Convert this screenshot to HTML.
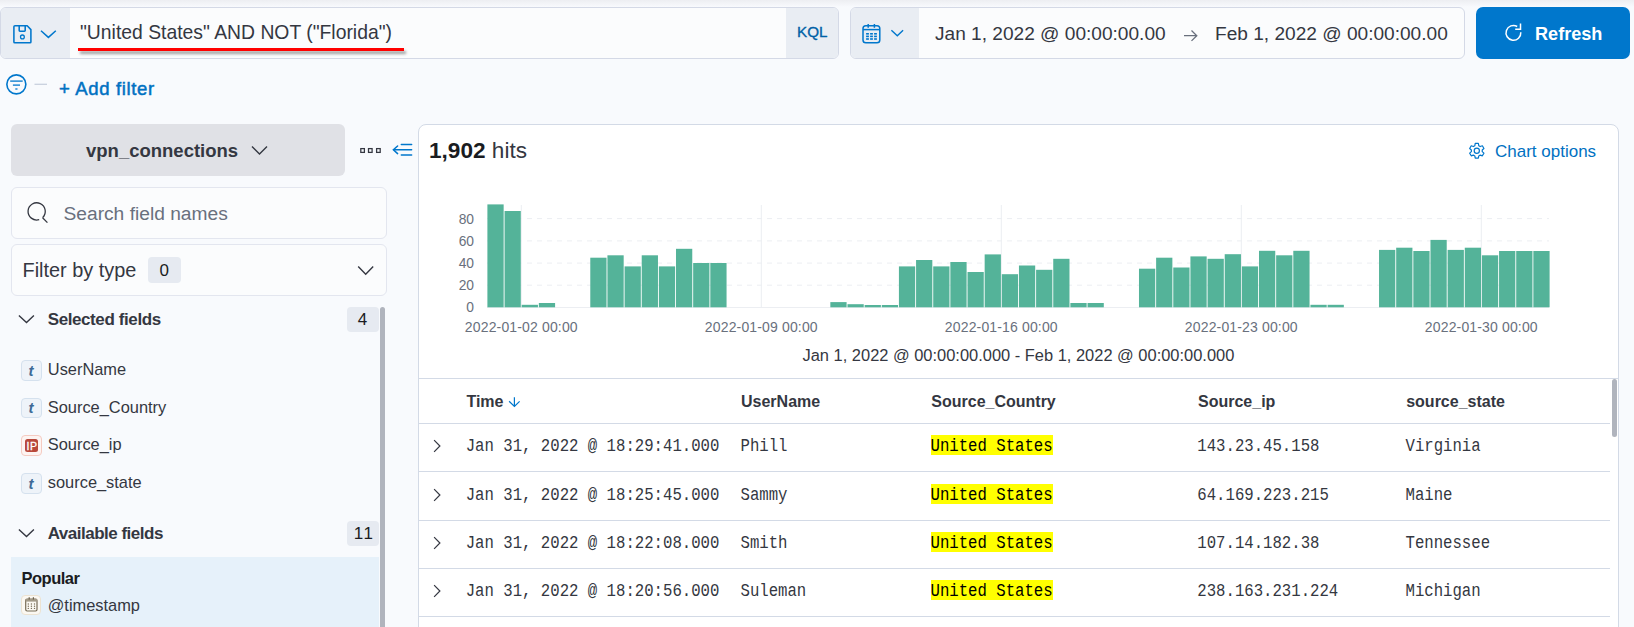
<!DOCTYPE html>
<html><head><meta charset="utf-8">
<style>
*{box-sizing:border-box}
html,body{margin:0;padding:0;width:1634px;height:627px;overflow:hidden;background:#f8fafd;font-family:"Liberation Sans",sans-serif;color:#343741;position:relative}
.a{position:absolute}
.t{position:absolute;line-height:1;white-space:nowrap}
.m{font-family:"Liberation Mono",monospace}
svg{overflow:visible}
</style></head><body>
<div class="a" style="left:0;top:0;width:1634px;height:7px;background:linear-gradient(#edeef2,#f8fafd)"></div>

<!-- query bar -->
<div class="a" style="left:0;top:7px;width:839px;height:52px;border:1px solid #d4d9e6;border-radius:6px;background:#fbfcfd;overflow:hidden">
  <div class="a" style="left:0;top:0;width:69px;height:50px;background:#e9edf3"></div>
  <div class="a" style="left:785px;top:0;width:53px;height:50px;background:#e9edf3"></div>
</div>
<svg class="a" style="left:0;top:0" width="70" height="59" viewBox="0 0 70 59">
 <g fill="none" stroke="#0077cc" stroke-width="1.55" stroke-linejoin="round">
  <path d="M15 25.8 H27.2 L30.9 29.6 V41.9 Q30.9 42.8 30 42.8 H14.8 Q13.9 42.8 13.9 41.9 V26.7 Q13.9 25.8 15 25.8 Z"/>
  <path d="M19.2 25.8 V30.6 Q19.2 31.3 19.9 31.3 H24.5 Q25.2 31.3 25.2 30.6 V25.8"/>
  <circle cx="22.4" cy="36.9" r="1.9" stroke-width="1.3"/>
 </g>
 <path d="M41 30.7 L48.4 37.4 L55.8 30.7" fill="none" stroke="#0077cc" stroke-width="1.45"/>
</svg>
<div class="t" style="left:80px;top:22.5px;font-size:19.35px;color:#343741">"United States" AND NOT ("Florida")</div>
<div class="a" style="left:78px;top:48px;width:325.5px;height:3px;background:#ff0000;box-shadow:2px 3px 3px rgba(0,0,0,0.38)"></div>
<div class="t" style="left:797px;top:24.1px;font-size:15.2px;-webkit-text-stroke:0.35px #0061a6;color:#0061a6">KQL</div>

<!-- date picker -->
<div class="a" style="left:850px;top:7px;width:615px;height:52px;border:1px solid #d4d9e6;border-radius:6px;background:#fbfcfd;overflow:hidden">
  <div class="a" style="left:0;top:0;width:68px;height:50px;background:#e9edf3"></div>
</div>
<svg class="a" style="left:850px;top:0" width="70" height="59" viewBox="850 0 70 59">
 <g fill="none" stroke="#0077cc" stroke-width="1.5">
  <rect x="863" y="25.8" width="16.8" height="17" rx="2.8"/>
  <line x1="863" y1="29.6" x2="879.8" y2="29.6"/>
  <line x1="868.2" y1="24" x2="868.2" y2="27.8"/>
  <line x1="874.4" y1="24" x2="874.4" y2="27.8"/>
 </g>
 <g fill="#0077cc">
  <rect x="866.1" y="33" width="2.8" height="1.6"/><rect x="870.1" y="33" width="2.8" height="1.6"/><rect x="874.1" y="33" width="2.8" height="1.6"/>
  <rect x="866.1" y="35.6" width="2.8" height="1.6"/><rect x="870.1" y="35.6" width="2.8" height="1.6"/><rect x="874.1" y="35.6" width="2.8" height="1.6"/>
  <rect x="866.1" y="38.2" width="2.8" height="1.6"/><rect x="870.1" y="38.2" width="2.8" height="1.6"/><rect x="874.1" y="38.2" width="2.8" height="1.6"/>
 </g>
 <path d="M891.4 30.2 L897.3 35.7 L903.1 30.2" fill="none" stroke="#0077cc" stroke-width="1.4"/>
</svg>
<div class="t" style="left:935px;top:24.1px;font-size:19.1px;color:#343741">Jan 1, 2022 @ 00:00:00.00</div>
<svg class="a" style="left:1180px;top:28px" width="20" height="16" viewBox="1180 28 20 16">
 <path d="M1184 35.7 H1197 M1191.5 30.5 L1196.8 35.7 L1191.5 40.9" fill="none" stroke="#69707d" stroke-width="1.3"/>
</svg>
<div class="t" style="left:1215px;top:24.1px;font-size:19.1px;color:#343741">Feb 1, 2022 @ 00:00:00.00</div>

<!-- refresh -->
<div class="a" style="left:1476px;top:7px;width:154px;height:52px;border-radius:7px;background:#0077cc"></div>
<svg class="a" style="left:1495px;top:15px" width="35" height="35" viewBox="1495 15 35 35">
 <path d="M1520.8 32.3 A7.4 7.4 0 1 1 1517.2 26.5" fill="none" stroke="#fff" stroke-width="1.5"/>
 <path d="M1520.5 23.4 V29.2 H1515.2" fill="none" stroke="#fff" stroke-width="1.5"/>
</svg>
<div class="t" style="left:1535px;top:24.6px;font-size:18.1px;font-weight:bold;color:#fff">Refresh</div>

<!-- filter row -->
<svg class="a" style="left:0;top:65px" width="60" height="40" viewBox="0 65 60 40">
 <circle cx="16.35" cy="84.35" r="9.5" fill="none" stroke="#0077cc" stroke-width="1.6"/>
 <g stroke="#0077cc" stroke-width="1.3"><line x1="10.2" y1="81.1" x2="22.7" y2="81.1"/><line x1="12.9" y1="85.1" x2="20" y2="85.1"/><line x1="15.3" y1="89" x2="17.5" y2="89"/></g>
 <line x1="34.5" y1="84.3" x2="47" y2="84.3" stroke="#c9d0de" stroke-width="1.3"/>
</svg>
<div class="t" style="left:59px;top:80.3px;font-size:18.5px;letter-spacing:0.65px;-webkit-text-stroke:0.5px #0071c2;color:#0071c2">+ Add filter</div>

<!-- sidebar -->
<div class="a" style="left:11px;top:124px;width:334px;height:52px;border-radius:6px;background:#e0e1e6"></div>
<div class="t" style="left:86px;top:142.3px;font-size:18.5px;font-weight:bold;color:#343741">vpn_connections</div>
<svg class="a" style="left:240px;top:135px" width="190" height="30" viewBox="240 135 190 30">
 <path d="M252 146.4 L259.5 154 L267 146.4" fill="none" stroke="#343741" stroke-width="1.4"/>
 <g fill="none" stroke="#343741" stroke-width="1.25"><rect x="360.8" y="148.6" width="3.6" height="3.8"/><rect x="368.5" y="148.6" width="3.6" height="3.8"/><rect x="376.6" y="148.6" width="3.6" height="3.8"/></g>
 <g fill="none" stroke="#0077cc" stroke-width="1.5" stroke-linecap="round"><path d="M397.6 146 L393.4 149.7 L397.6 153.6"/><line x1="401.3" y1="144.5" x2="411.6" y2="144.5"/><line x1="394" y1="149.7" x2="411.6" y2="149.7"/><line x1="401.3" y1="155" x2="411.6" y2="155"/></g>
</svg>

<div class="a" style="left:11px;top:187px;width:376px;height:52px;border:1px solid #e3e6ef;border-radius:6px;background:#fbfcfd"></div>
<svg class="a" style="left:20px;top:195px" width="40" height="35" viewBox="20 195 40 35">
 <path d="M42.6 217.6 A8.6 8.6 0 1 0 39.2 219.6" fill="none" stroke="#343741" stroke-width="1.3"/>
 <line x1="42.6" y1="217.8" x2="47.4" y2="222.6" stroke="#343741" stroke-width="1.3"/>
</svg>
<div class="t" style="left:63.5px;top:203.6px;font-size:19.2px;color:#69707d">Search field names</div>

<div class="a" style="left:11px;top:244px;width:376px;height:52px;border:1px solid #e3e6ef;border-radius:6px;background:#fbfcfd"></div>
<div class="t" style="left:22.5px;top:260.9px;font-size:19.9px;color:#343741">Filter by type</div>
<div class="a" style="left:148px;top:257px;width:32.5px;height:25.7px;border-radius:4px;background:#e6eaf1"></div>
<div class="t" style="left:159.5px;top:261.5px;font-size:17px;color:#1a1c21">0</div>
<svg class="a" style="left:350px;top:260px" width="30" height="20" viewBox="350 260 30 20">
 <path d="M358.2 266.6 L365.7 274.2 L373.2 266.6" fill="none" stroke="#343741" stroke-width="1.4"/>
</svg>

<svg class="a" style="left:10px;top:305px" width="30" height="25" viewBox="10 305 30 25">
 <path d="M18.9 315.6 L26.5 322.6 L33.9 315.6" fill="none" stroke="#343741" stroke-width="1.4"/>
</svg>
<div class="t" style="left:47.7px;top:311.1px;font-size:17px;font-weight:bold;letter-spacing:-0.4px;color:#343741">Selected fields</div>
<div class="a" style="left:347px;top:307.2px;width:31.7px;height:25.2px;border-radius:4px;background:#e6eaf1"></div>
<div class="t" style="left:357.8px;top:310.6px;font-size:17px;color:#1a1c21">4</div>

<!-- field tokens -->
<div class="a" style="left:21px;top:360px;width:20.6px;height:20.6px;border:1px solid #d5e1ee;border-radius:4px;background:#eef3f9"></div>
<div class="t" style="left:28.4px;top:362.5px;font-size:15px;font-weight:bold;font-style:italic;color:#3d6a96">t</div>
<div class="t" style="left:47.8px;top:361.1px;font-size:16.4px">UserName</div>
<div class="a" style="left:21px;top:397.7px;width:20.6px;height:20.6px;border:1px solid #d5e1ee;border-radius:4px;background:#eef3f9"></div>
<div class="t" style="left:28.4px;top:400.2px;font-size:15px;font-weight:bold;font-style:italic;color:#3d6a96">t</div>
<div class="t" style="left:47.8px;top:398.8px;font-size:16.4px">Source_Country</div>
<div class="a" style="left:21px;top:435.3px;width:20.6px;height:20.6px;border:1px solid #f5cbc2;border-radius:4px;background:#fdf4f2"></div>
<div class="a" style="left:25px;top:439px;width:13px;height:12.8px;border-radius:2.5px;background:#b8483b"></div>
<div class="t" style="left:26.4px;top:440.8px;font-size:10.5px;-webkit-text-stroke:0.3px #fff;color:#fff;letter-spacing:0.8px">IP</div>
<div class="t" style="left:47.8px;top:436.4px;font-size:16.4px">Source_ip</div>
<div class="a" style="left:21px;top:473px;width:20.6px;height:20.6px;border:1px solid #d5e1ee;border-radius:4px;background:#eef3f9"></div>
<div class="t" style="left:28.4px;top:475.5px;font-size:15px;font-weight:bold;font-style:italic;color:#3d6a96">t</div>
<div class="t" style="left:47.8px;top:474.1px;font-size:16.4px">source_state</div>

<svg class="a" style="left:10px;top:520px" width="30" height="25" viewBox="10 520 30 25">
 <path d="M18.9 529.6 L26.5 536.6 L33.9 529.6" fill="none" stroke="#343741" stroke-width="1.4"/>
</svg>
<div class="t" style="left:47.7px;top:524.8px;font-size:17px;font-weight:bold;letter-spacing:-0.5px;color:#343741">Available fields</div>
<div class="a" style="left:347px;top:521.3px;width:31.7px;height:25.2px;border-radius:4px;background:#e6eaf1"></div>
<div class="t" style="left:353.8px;top:524.8px;font-size:17px;color:#1a1c21;letter-spacing:1.6px">11</div>

<div class="a" style="left:11px;top:557px;width:368px;height:70px;background:#e6f1fa"></div>
<div class="t" style="left:21.5px;top:570px;font-size:16.5px;font-weight:bold;letter-spacing:-0.5px;color:#1a1c21">Popular</div>
<div class="a" style="left:21.3px;top:595.4px;width:19.6px;height:19.6px;border:1px solid #ece3d2;border-radius:4px;background:#fbf8f2"></div>
<svg class="a" style="left:20px;top:592px" width="24" height="24" viewBox="20 592 24 24">
 <rect x="25.7" y="599" width="11.3" height="12" rx="1.4" fill="none" stroke="#776c57" stroke-width="1.2"/>
 <rect x="25.7" y="599" width="11.3" height="2.6" fill="#a39a88"/>
 <line x1="29.2" y1="597.2" x2="29.2" y2="599.5" stroke="#6b604b" stroke-width="1.2"/>
 <line x1="33.4" y1="597.2" x2="33.4" y2="599.5" stroke="#6b604b" stroke-width="1.2"/>
 <g fill="#7a705c"><circle cx="28.3" cy="604" r=".7"/><circle cx="31.4" cy="604" r=".7"/><circle cx="34.5" cy="604" r=".7"/><circle cx="28.3" cy="606.2" r=".7"/><circle cx="31.4" cy="606.2" r=".7"/><circle cx="34.5" cy="606.2" r=".7"/><circle cx="28.3" cy="608.4" r=".7"/><circle cx="31.4" cy="608.4" r=".7"/><circle cx="34.5" cy="608.4" r=".7"/></g>
</svg>
<div class="t" style="left:47.7px;top:596.7px;font-size:16.4px">@timestamp</div>
<div class="a" style="left:380px;top:307px;width:4.8px;height:330px;background:#b0b4bd;border-radius:2.5px"></div>

<!-- main panel -->
<div class="a" style="left:418px;top:124px;width:1201px;height:540px;border:1px solid #d3dae6;border-radius:8px;background:#fff"></div>
<div class="t" style="left:429px;top:139.8px;font-size:22.6px;color:#343741"><b style="color:#1a1c21">1,902</b> hits</div>
<svg class="a" style="left:1460px;top:135px" width="35" height="30" viewBox="1460 135 35 30">
 <path id="gear" fill="none" stroke="#0077cc" stroke-width="1.2" stroke-linejoin="round" d="M1474.83 145.67 L1475.24 143.46 L1478.36 143.46 L1478.77 145.67 L1480.26 146.53 L1482.37 145.78 L1483.93 148.48 L1482.23 149.94 L1482.23 151.66 L1483.93 153.12 L1482.37 155.82 L1480.26 155.07 L1478.77 155.93 L1478.36 158.14 L1475.24 158.14 L1474.83 155.93 L1473.34 155.07 L1471.23 155.82 L1469.67 153.12 L1471.37 151.66 L1471.37 149.94 L1469.67 148.48 L1471.23 145.78 L1473.34 146.53Z"/>
 <circle cx="1476.8" cy="150.8" r="2.6" fill="none" stroke="#0077cc" stroke-width="1.2"/>
</svg>
<div class="t" style="left:1495px;top:142.8px;font-size:17px;color:#0071c2">Chart options</div>
<svg class="a" style="left:0;top:0" width="1634" height="627" viewBox="0 0 1634 627">
<g stroke="#eceef2" stroke-width="1" stroke-dasharray="5 5"><line x1="487" y1="218.6" x2="1549" y2="218.6"/><line x1="487" y1="240.9" x2="1549" y2="240.9"/><line x1="487" y1="263.1" x2="1549" y2="263.1"/><line x1="487" y1="285.2" x2="1549" y2="285.2"/></g>
<g stroke="#eceef2" stroke-width="1"><line x1="521.3" y1="205" x2="521.3" y2="307"/><line x1="761.3" y1="205" x2="761.3" y2="307"/><line x1="1001.3" y1="205" x2="1001.3" y2="307"/><line x1="1241.3" y1="205" x2="1241.3" y2="307"/><line x1="1481.3" y1="205" x2="1481.3" y2="307"/><line x1="487" y1="307.5" x2="1549" y2="307.5"/></g>
<g fill="#54b399"><rect x="487.40" y="204.4" width="16.25" height="102.9"/>
<rect x="504.55" y="211.0" width="16.25" height="96.3"/>
<rect x="521.69" y="304.8" width="16.25" height="2.5"/>
<rect x="538.84" y="303.0" width="16.25" height="4.3"/>
<rect x="590.28" y="257.7" width="16.25" height="49.6"/>
<rect x="607.43" y="255.3" width="16.25" height="52.0"/>
<rect x="624.57" y="266.4" width="16.25" height="40.9"/>
<rect x="641.72" y="255.3" width="16.25" height="52.0"/>
<rect x="658.87" y="266.4" width="16.25" height="40.9"/>
<rect x="676.01" y="248.8" width="16.25" height="58.5"/>
<rect x="693.16" y="263.0" width="16.25" height="44.3"/>
<rect x="710.31" y="263.0" width="16.25" height="44.3"/>
<rect x="830.34" y="302.1" width="16.25" height="5.2"/>
<rect x="847.48" y="304.2" width="16.25" height="3.1"/>
<rect x="864.63" y="305.0" width="16.25" height="2.3"/>
<rect x="881.78" y="305.0" width="16.25" height="2.3"/>
<rect x="898.92" y="266.4" width="16.25" height="40.9"/>
<rect x="916.07" y="260.0" width="16.25" height="47.3"/>
<rect x="933.22" y="266.4" width="16.25" height="40.9"/>
<rect x="950.36" y="262.0" width="16.25" height="45.3"/>
<rect x="967.51" y="272.0" width="16.25" height="35.3"/>
<rect x="984.66" y="254.4" width="16.25" height="52.9"/>
<rect x="1001.80" y="274.2" width="16.25" height="33.1"/>
<rect x="1018.95" y="265.5" width="16.25" height="41.8"/>
<rect x="1036.10" y="269.8" width="16.25" height="37.5"/>
<rect x="1053.24" y="258.8" width="16.25" height="48.5"/>
<rect x="1070.39" y="303.0" width="16.25" height="4.3"/>
<rect x="1087.54" y="303.0" width="16.25" height="4.3"/>
<rect x="1138.98" y="268.7" width="16.25" height="38.6"/>
<rect x="1156.12" y="257.7" width="16.25" height="49.6"/>
<rect x="1173.27" y="267.5" width="16.25" height="39.8"/>
<rect x="1190.42" y="256.4" width="16.25" height="50.9"/>
<rect x="1207.56" y="258.8" width="16.25" height="48.5"/>
<rect x="1224.71" y="254.2" width="16.25" height="53.1"/>
<rect x="1241.86" y="266.4" width="16.25" height="40.9"/>
<rect x="1259.00" y="250.8" width="16.25" height="56.5"/>
<rect x="1276.15" y="255.3" width="16.25" height="52.0"/>
<rect x="1293.30" y="250.8" width="16.25" height="56.5"/>
<rect x="1310.45" y="304.8" width="16.25" height="2.5"/>
<rect x="1327.59" y="304.8" width="16.25" height="2.5"/>
<rect x="1379.03" y="249.9" width="16.25" height="57.4"/>
<rect x="1396.18" y="247.7" width="16.25" height="59.6"/>
<rect x="1413.33" y="251.0" width="16.25" height="56.3"/>
<rect x="1430.47" y="239.9" width="16.25" height="67.4"/>
<rect x="1447.62" y="249.9" width="16.25" height="57.4"/>
<rect x="1464.77" y="247.7" width="16.25" height="59.6"/>
<rect x="1481.91" y="255.3" width="16.25" height="52.0"/>
<rect x="1499.06" y="251.0" width="16.25" height="56.3"/>
<rect x="1516.21" y="251.0" width="16.25" height="56.3"/>
<rect x="1533.35" y="251.0" width="16.25" height="56.3"/></g>
<g font-family="Liberation Sans" font-size="13.8" fill="#69707d" text-anchor="end"><text x="474" y="223.6">80</text><text x="474" y="245.9">60</text><text x="474" y="268.1">40</text><text x="474" y="290.2">20</text><text x="474" y="312.3">0</text></g>
<g font-family="Liberation Sans" font-size="14" fill="#69707d" text-anchor="middle" letter-spacing="0.15"><text x="521.3" y="331.6">2022-01-02 00:00</text><text x="761.3" y="331.6">2022-01-09 00:00</text><text x="1001.3" y="331.6">2022-01-16 00:00</text><text x="1241.3" y="331.6">2022-01-23 00:00</text><text x="1481.3" y="331.6">2022-01-30 00:00</text></g>
</svg>
<div class="t" style="left:802.5px;top:347.4px;font-size:16.45px;color:#343741">Jan 1, 2022 @ 00:00:00.000 - Feb 1, 2022 @ 00:00:00.000</div>
<div class="a" style="left:419px;top:378px;width:1199px;height:1px;background:#d3dae6"></div>

<!-- table header -->
<div class="t" style="left:466.4px;top:393.6px;font-size:16px;font-weight:bold;color:#343741">Time</div>
<svg class="a" style="left:505px;top:393px" width="20" height="18" viewBox="505 393 20 18">
 <path d="M514.4 397.2 V406.5 M509.1 401.3 L514.4 406.5 L519.6 401.3" fill="none" stroke="#0077cc" stroke-width="1.2"/>
</svg>
<div class="t" style="left:741px;top:393.6px;font-size:16px;font-weight:bold;color:#343741">UserName</div>
<div class="t" style="left:931.3px;top:393.6px;font-size:16px;font-weight:bold;color:#343741">Source_Country</div>
<div class="t" style="left:1198px;top:393.6px;font-size:16px;font-weight:bold;color:#343741">Source_ip</div>
<div class="t" style="left:1406.2px;top:393.6px;font-size:16px;font-weight:bold;color:#343741">source_state</div>
<div class="a" style="left:419px;top:423px;width:1191px;height:1px;background:#d3dae6"></div>
<div class="a" style="left:419px;top:471px;width:1191px;height:1px;background:#d3dae6"></div>
<div class="a" style="left:419px;top:520px;width:1191px;height:1px;background:#d3dae6"></div>
<div class="a" style="left:419px;top:568px;width:1191px;height:1px;background:#d3dae6"></div>
<div class="a" style="left:419px;top:616px;width:1191px;height:1px;background:#d3dae6"></div>
<svg class="a" style="left:430px;top:438.4px" width="14" height="16" viewBox="0 0 14 16"><path d="M4.1 2.2 L9.9 8 L4.1 13.8" fill="none" stroke="#343741" stroke-width="1.2"/></svg>
<div class="t m" style="left:465.7px;top:440.0px;font-size:15.67px;color:#343741;transform-origin:0 11.9px;transform:scaleY(1.17)">Jan 31, 2022 @ 18:29:41.000</div>
<div class="t m" style="left:740.5px;top:440.0px;font-size:15.67px;color:#343741;transform-origin:0 11.9px;transform:scaleY(1.17)">Phill</div>
<div class="a" style="left:931px;top:435.0px;width:122px;height:20px;background:#ffff00"></div>
<div class="t m" style="left:930.5px;top:440.0px;font-size:15.67px;color:#000;transform-origin:0 11.9px;transform:scaleY(1.17)">United States</div>
<div class="t m" style="left:1197.3px;top:440.0px;font-size:15.67px;color:#343741;transform-origin:0 11.9px;transform:scaleY(1.17)">143.23.45.158</div>
<div class="t m" style="left:1405.5px;top:440.0px;font-size:15.67px;color:#343741;transform-origin:0 11.9px;transform:scaleY(1.17)">Virginia</div>
<svg class="a" style="left:430px;top:486.9px" width="14" height="16" viewBox="0 0 14 16"><path d="M4.1 2.2 L9.9 8 L4.1 13.8" fill="none" stroke="#343741" stroke-width="1.2"/></svg>
<div class="t m" style="left:465.7px;top:488.5px;font-size:15.67px;color:#343741;transform-origin:0 11.9px;transform:scaleY(1.17)">Jan 31, 2022 @ 18:25:45.000</div>
<div class="t m" style="left:740.5px;top:488.5px;font-size:15.67px;color:#343741;transform-origin:0 11.9px;transform:scaleY(1.17)">Sammy</div>
<div class="a" style="left:931px;top:483.5px;width:122px;height:20px;background:#ffff00"></div>
<div class="t m" style="left:930.5px;top:488.5px;font-size:15.67px;color:#000;transform-origin:0 11.9px;transform:scaleY(1.17)">United States</div>
<div class="t m" style="left:1197.3px;top:488.5px;font-size:15.67px;color:#343741;transform-origin:0 11.9px;transform:scaleY(1.17)">64.169.223.215</div>
<div class="t m" style="left:1405.5px;top:488.5px;font-size:15.67px;color:#343741;transform-origin:0 11.9px;transform:scaleY(1.17)">Maine</div>
<svg class="a" style="left:430px;top:535.3px" width="14" height="16" viewBox="0 0 14 16"><path d="M4.1 2.2 L9.9 8 L4.1 13.8" fill="none" stroke="#343741" stroke-width="1.2"/></svg>
<div class="t m" style="left:465.7px;top:536.9px;font-size:15.67px;color:#343741;transform-origin:0 11.9px;transform:scaleY(1.17)">Jan 31, 2022 @ 18:22:08.000</div>
<div class="t m" style="left:740.5px;top:536.9px;font-size:15.67px;color:#343741;transform-origin:0 11.9px;transform:scaleY(1.17)">Smith</div>
<div class="a" style="left:931px;top:531.9px;width:122px;height:20px;background:#ffff00"></div>
<div class="t m" style="left:930.5px;top:536.9px;font-size:15.67px;color:#000;transform-origin:0 11.9px;transform:scaleY(1.17)">United States</div>
<div class="t m" style="left:1197.3px;top:536.9px;font-size:15.67px;color:#343741;transform-origin:0 11.9px;transform:scaleY(1.17)">107.14.182.38</div>
<div class="t m" style="left:1405.5px;top:536.9px;font-size:15.67px;color:#343741;transform-origin:0 11.9px;transform:scaleY(1.17)">Tennessee</div>
<svg class="a" style="left:430px;top:583.3px" width="14" height="16" viewBox="0 0 14 16"><path d="M4.1 2.2 L9.9 8 L4.1 13.8" fill="none" stroke="#343741" stroke-width="1.2"/></svg>
<div class="t m" style="left:465.7px;top:584.9px;font-size:15.67px;color:#343741;transform-origin:0 11.9px;transform:scaleY(1.17)">Jan 31, 2022 @ 18:20:56.000</div>
<div class="t m" style="left:740.5px;top:584.9px;font-size:15.67px;color:#343741;transform-origin:0 11.9px;transform:scaleY(1.17)">Suleman</div>
<div class="a" style="left:931px;top:579.9px;width:122px;height:20px;background:#ffff00"></div>
<div class="t m" style="left:930.5px;top:584.9px;font-size:15.67px;color:#000;transform-origin:0 11.9px;transform:scaleY(1.17)">United States</div>
<div class="t m" style="left:1197.3px;top:584.9px;font-size:15.67px;color:#343741;transform-origin:0 11.9px;transform:scaleY(1.17)">238.163.231.224</div>
<div class="t m" style="left:1405.5px;top:584.9px;font-size:15.67px;color:#343741;transform-origin:0 11.9px;transform:scaleY(1.17)">Michigan</div>
<div class="a" style="left:1612px;top:379px;width:5px;height:57.5px;background:#b0b4bd;border-radius:2.5px"></div>
</body></html>
